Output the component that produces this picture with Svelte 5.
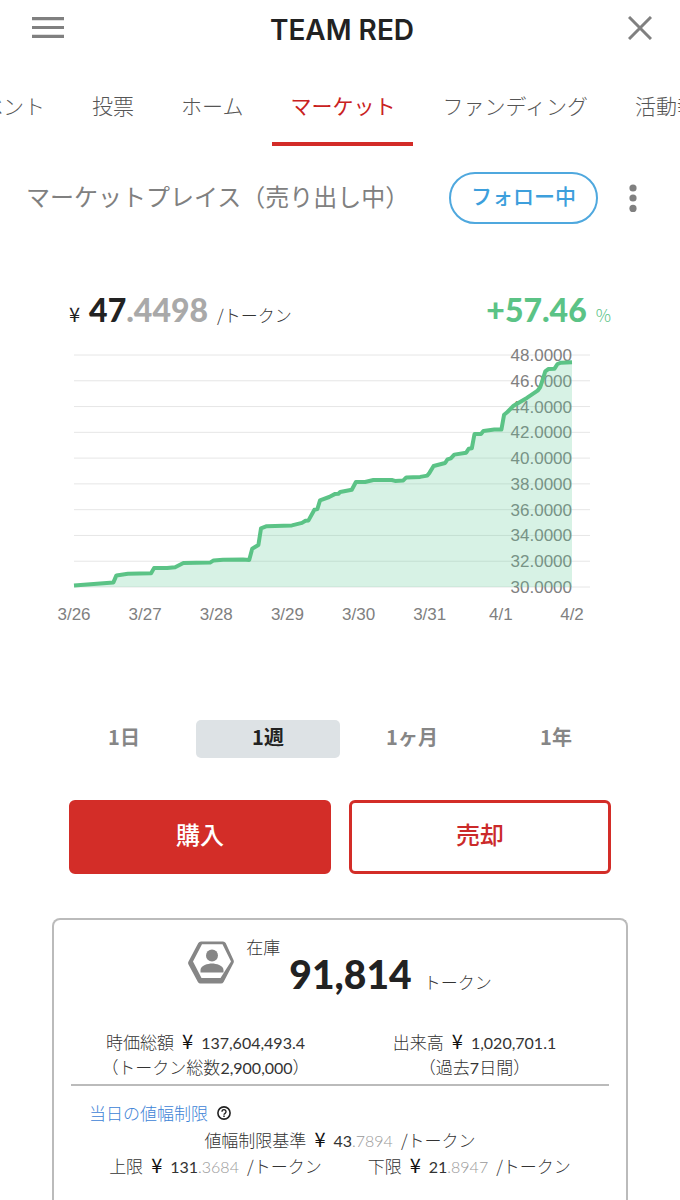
<script lang="ts">
  interface Tab {
    label: string;
    href: string;
  }

  const tabs: Tab[] = [
    { label: 'イベント', href: '#event' },
    { label: '投票', href: '#vote' },
    { label: 'ホーム', href: '#home' },
    { label: 'マーケット', href: '#market' },
    { label: 'ファンディング', href: '#funding' },
    { label: '活動報告', href: '#report' }
  ];
  const periods = ['1日', '1週', '1ヶ月', '1年'];

  let activeTab = $state('マーケット');
  let activePeriod = $state('1週');

  // [hours since 3/26, price]
  const history: [number, number][] = [
    [0, 30.12], [13.3, 30.36], [14.3, 30.9], [18.2, 31.03], [26, 31.06], [27, 31.47],
    [31.4, 31.47], [34.1, 31.54], [36.9, 31.86], [45.9, 31.89], [47.1, 32.06], [50.3, 32.12],
    [57, 32.14], [59.1, 32.1], [60.1, 32.97], [62.2, 33.26], [63.1, 34.55], [65, 34.72],
    [73.5, 34.78], [76.9, 34.97], [78.1, 35.14], [79.1, 35.17], [81.1, 36], [82.1, 36.05],
    [83, 36.72], [86.1, 36.98], [88.1, 37.22], [89.2, 37.24], [89.8, 37.37], [93.7, 37.55],
    [95.1, 38.15], [98.2, 38.15], [101, 38.3], [107.2, 38.3], [108.3, 38.23], [111.1, 38.27],
    [112.1, 38.5], [116.8, 38.54], [119.2, 38.64], [119.9, 38.85], [121.3, 39.39], [125.2, 39.62],
    [126, 39.9], [127.1, 39.98], [128.3, 40.27], [132.3, 40.42], [133.2, 40.73], [134.2, 40.76],
    [135.1, 41.87], [137.3, 41.87], [138.1, 42.1], [141.8, 42.21], [144.2, 42.21], [145.1, 43.37],
    [146.2, 43.58], [148.3, 44.07], [152.8, 44.67], [156.4, 45.23], [157.3, 45.52], [159, 46.73],
    [160.1, 46.92], [162.1, 46.94], [163.1, 47.3], [164.3, 47.4], [168, 47.43]
  ];
  const days = ['3/26', '3/27', '3/28', '3/29', '3/30', '3/31', '4/1', '4/2'];
  const prices = [48, 46, 44, 42, 40, 38, 36, 34, 32, 30];

  const left = 22;
  const right = 520;
  const top = 15;
  const bottom = 247;

  const x = (hours: number) => left + (hours / 168) * (right - left);
  const y = (price: number) => bottom - ((price - 30) / 18) * (bottom - top);

  const line = history.map(([h, p]) => `${x(h).toFixed(1)},${y(p).toFixed(1)}`).join(' ');
  const area = `${left},${bottom} ${line} ${right},${bottom}`;
</script>

{#snippet amount(label: string, whole: string, decimals: string, unit: string)}
  <p class="amount">
    <span>{label}</span>
    <span class="yen">¥</span>
    <span class="num">{whole}<span class="decimals">{decimals}</span></span>
    {#if unit}<span class="unit">{unit}</span>{/if}
  </p>
{/snippet}

<div class="page">
  <header>
    <button class="icon-btn" aria-label="メニュー">
      <svg width="32" height="22" viewBox="0 0 32 22">
        <path d="M0 1.7h32M0 10.5h32M0 19.3h32" stroke="#808080" stroke-width="3.2" />
      </svg>
    </button>
    <h1>TEAM RED</h1>
    <button class="icon-btn close" aria-label="閉じる">
      <svg width="24" height="24" viewBox="0 0 24 24">
        <path d="M1 1l22 22M23 1L1 23" stroke="#808080" stroke-width="3" />
      </svg>
    </button>
  </header>

  <nav>
    {#each tabs as tab (tab.label)}
      <a href={tab.href} class:active={activeTab === tab.label} onclick={() => (activeTab = tab.label)}>
        {tab.label}
      </a>
    {/each}
  </nav>

  <div class="heading">
    <h2>マーケットプレイス（売り出し中）</h2>
    <button class="follow">フォロー中</button>
    <button class="icon-btn" aria-label="その他">
      <svg width="8" height="28" viewBox="0 0 8 28" fill="#808080">
        <circle cx="4" cy="4" r="3.6" />
        <circle cx="4" cy="14" r="3.6" />
        <circle cx="4" cy="24.4" r="3.6" />
      </svg>
    </button>
  </div>

  <div class="price">
    <p>
      <span class="price-yen">¥</span>
      <strong>47<span class="price-decimals">.4498</span></strong>
      <span class="price-unit">/トークン</span>
    </p>
    <p class="change"><strong>+57.46</strong><span class="price-unit">%</span></p>
  </div>

  <svg class="chart" viewBox="0 0 576 290" role="img" aria-label="価格チャート">
    {#each prices as price}
      <line x1={left} x2={right + 18} y1={y(price)} y2={y(price)} class="grid" />
      <text x={right} y={y(price) + 6} text-anchor="end">{price.toFixed(4)}</text>
    {/each}
    <polygon points={area} class="area" />
    <polyline points={line} class="line" />
    {#each days as day, i}
      <text x={x(i * 24)} y="280" text-anchor="middle">{day}</text>
    {/each}
  </svg>

  <div class="periods">
    {#each periods as period}
      <button class:active={activePeriod === period} onclick={() => (activePeriod = period)}>
        {period}
      </button>
    {/each}
  </div>

  <div class="trade">
    <button class="buy">購入</button>
    <button class="sell">売却</button>
  </div>

  <section class="card">
    <div class="stock">
      <svg width="46" height="43" viewBox="0 0 46 43">
        <path
          fill="#868686"
          fill-rule="evenodd"
          d="M13 0.5h22q1.8 0 2.7 1.5L45.5 19q0.7 1.5 0 3L35.6 41q-0.9 1.5-2.6 1.5H12.5q-1.7 0-2.6-1.5L0.5 23.5q-0.8-1.5 0-3L10.3 2Q11.2 0.5 13 0.5zM14 3.300L5 20.500L13.500 37H32.500L43 20.500L34.500 3.300z"
        />
        <circle cx="24" cy="14.5" r="6" fill="#868686" />
        <path d="M12.500 31.500v-2.500c0-4.500 7.500-6.500 11.500-6.500s11.500 2 11.500 6.500v2.500z" fill="#868686" />
      </svg>
      <span class="stock-label">在庫</span>
      <strong>91,814</strong>
      <span class="stock-unit">トークン</span>
    </div>

    <div class="totals">
      <div>
        {@render amount('時価総額', '137,604,493.4', '', '')}
        <p class="note">（トークン総数<span class="num">2,900,000</span>）</p>
      </div>
      <div>
        {@render amount('出来高', '1,020,701.1', '', '')}
        <p class="note">（過去<span class="num">7</span>日間）</p>
      </div>
    </div>

    <div class="limits">
      <a href="#limits">
        当日の値幅制限
        <svg width="14" height="14" viewBox="0 0 14 14" fill="none" stroke="#222">
          <circle cx="7" cy="7" r="6.1" stroke-width="1.6" />
          <path d="M5 5.7a2 2 0 1 1 3.1 1.6q-1.1 0.7-1.1 1.4" stroke-width="1.4" />
          <path d="M7 9.6v1.5" stroke-width="1.5" />
        </svg>
      </a>
      {@render amount('値幅制限基準', '43', '.7894', '/トークン')}
      <div class="range">
        {@render amount('上限', '131', '.3684', '/トークン')}
        {@render amount('下限', '21', '.8947', '/トークン')}
      </div>
    </div>
  </section>
</div>

<style>
  :global(body) {
    background: #fff;
  }

  .page {
    display: flex;
    flex-direction: column;
    min-height: 100vh;
    box-sizing: border-box;
    overflow: hidden;
    color: #333;
    font-family: 'Noto Sans CJK JP', sans-serif;
    font-size: 17px;
    line-height: 26px;
  }

  h1,
  h2,
  p {
    margin: 0;
  }

  button {
    padding: 0;
    border: none;
    background: none;
    font: inherit;
    color: inherit;
    cursor: pointer;
  }

  a {
    text-decoration: none;
  }

  svg {
    display: block;
  }

  header {
    display: grid;
    grid-template-columns: 1fr auto 1fr;
    align-items: center;
    height: 56px;
    padding: 0 28px 0 32px;
  }

  .close {
    justify-self: end;
  }

  h1 {
    padding-top: 4px;
    font-family: Inter, sans-serif;
    font-size: 28px;
    font-weight: 600;
    color: #222;
  }

  nav {
    display: flex;
    justify-content: center;
    gap: 11px;
    margin-top: 16px;
  }

  nav a {
    flex: none;
    padding: 0 18px 4px;
    border-bottom: 4px solid transparent;
    font-size: 21px;
    line-height: 66px;
    font-weight: 300;
    color: #555;
  }

  nav a.active {
    border-color: #d32b28;
    color: #c9211e;
    font-weight: 400;
  }

  .heading {
    display: flex;
    align-items: center;
    padding: 0 43px 0 26px;
    margin-top: 26px;
  }

  h2 {
    flex: 1;
    padding-bottom: 4px;
    font-size: 24px;
    font-weight: 400;
    color: #808080;
  }

  .follow {
    width: 149px;
    height: 52px;
    margin-right: 31px;
    padding-bottom: 6px;
    border: 2px solid #4fa8de;
    border-radius: 26px;
    color: #3d9fdc;
    font-size: 21px;
    font-weight: 500;
  }

  .price {
    display: flex;
    justify-content: space-between;
    align-items: baseline;
    padding: 0 69px;
    margin-top: 66px;
    line-height: 40px;
  }

  .price p {
    display: flex;
    align-items: baseline;
    gap: 9px;
  }

  .price strong {
    font-family: Lato, sans-serif;
    font-size: 32px;
    font-weight: 900;
    color: #222;
  }

  .price-yen {
    font-size: 20px;
    color: #222;
  }

  .price .price-decimals {
    color: #a9a9a9;
  }

  .price-unit {
    font-weight: 300;
  }

  .price .change,
  .price .change strong {
    color: #5bc386;
  }

  .chart {
    margin: 5px 52px 0;
    overflow: visible;
  }

  .chart text {
    font-family: 'Liberation Sans', Arial, sans-serif;
    font-size: 17px;
    fill: #808080;
  }

  .grid {
    stroke: #e6e6e6;
    stroke-width: 1;
  }

  .area {
    fill: #5fca98;
    fill-opacity: 0.25;
  }

  .line {
    fill: none;
    stroke: #5bc386;
    stroke-width: 4;
    stroke-linejoin: round;
  }

  .periods {
    display: flex;
    padding: 0 52px;
    margin-top: 90px;
  }

  .periods button {
    flex: 1;
    height: 38px;
    padding-bottom: 4px;
    border-radius: 5px;
    font-size: 20px;
    font-weight: 700;
    color: #868686;
  }

  .periods button.active {
    background: #dde2e5;
    color: #222;
  }

  .trade {
    display: flex;
    gap: 18px;
    padding: 0 69px;
    margin-top: 42px;
  }

  .trade button {
    flex: 1;
    height: 74px;
    padding-bottom: 6px;
    border: 3px solid #d32d28;
    border-radius: 6px;
    font-size: 24px;
    font-weight: 500;
  }

  .trade .buy {
    background: #d32d28;
    color: #fff;
  }

  .trade .sell {
    color: #cb2a2a;
  }

  .card {
    flex: 1;
    margin: 44px 52px 0;
    padding: 0 17px;
    border: 2px solid #bbb;
    border-bottom: none;
    border-radius: 8px 8px 0 0;
    font-weight: 300;
  }

  .num {
    font-family: Lato, 'Noto Sans CJK JP', sans-serif;
    font-size: 16px;
    font-weight: 400;
  }

  .stock {
    display: flex;
    justify-content: center;
    align-items: baseline;
    height: 96px;
    padding-top: 14px;
    box-sizing: border-box;
  }

  .stock svg {
    align-self: flex-start;
    margin-top: 7px;
  }

  .stock-label {
    align-self: flex-start;
    margin: 0 9px 0 12px;
  }

  .stock strong {
    font-family: Lato, sans-serif;
    font-size: 39px;
    line-height: 80px;
    font-weight: 900;
    color: #222;
  }

  .stock-unit {
    margin-left: 12px;
  }

  .totals {
    display: grid;
    grid-template-columns: 1fr 1fr;
    padding: 12px 0 4px;
    border-bottom: 2px solid #bbb;
    text-align: center;
  }

  .amount {
    display: flex;
    justify-content: center;
    align-items: baseline;
    gap: 8px;
    height: 26px;
  }

  .note {
    height: 26px;
  }

  .yen {
    font-size: 20px;
    font-weight: 400;
    color: #111;
  }

  .decimals {
    color: #999;
    font-weight: 300;
  }

  .limits {
    padding-top: 14px;
  }

  .limits a {
    display: flex;
    align-items: center;
    gap: 9px;
    padding-left: 18px;
    color: #3d83d6;
  }

  .range {
    display: flex;
    justify-content: center;
    gap: 46px;
  }
</style>
